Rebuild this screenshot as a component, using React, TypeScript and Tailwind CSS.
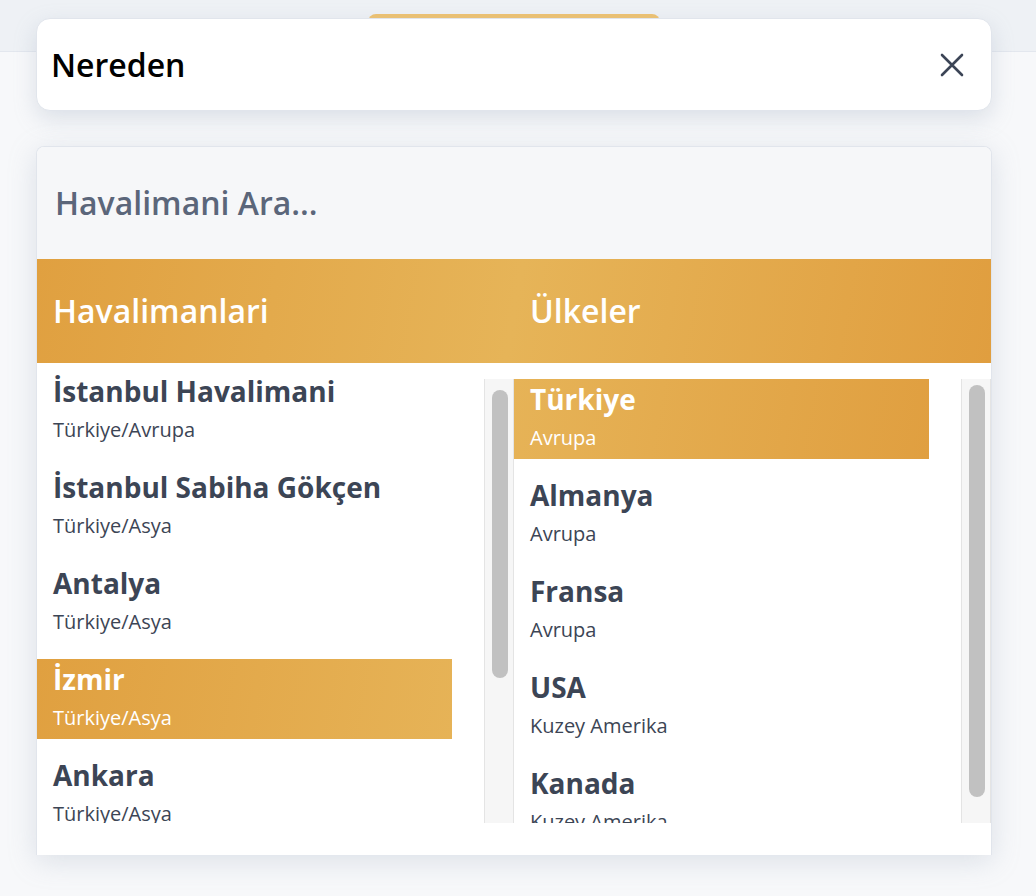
import clsx from 'clsx'

interface Entry {
  name: string
  region: string
  active?: boolean
}

const airports: Entry[] = [
  { name: 'İstanbul Havalimani', region: 'Türkiye/Avrupa' },
  { name: 'İstanbul Sabiha Gökçen', region: 'Türkiye/Asya' },
  { name: 'Antalya', region: 'Türkiye/Asya' },
  { name: 'İzmir', region: 'Türkiye/Asya', active: true },
  { name: 'Ankara', region: 'Türkiye/Asya' },
]

const countries: Entry[] = [
  { name: 'Türkiye', region: 'Avrupa', active: true },
  { name: 'Almanya', region: 'Avrupa' },
  { name: 'Fransa', region: 'Avrupa' },
  { name: 'USA', region: 'Kuzey Amerika' },
  { name: 'Kanada', region: 'Kuzey Amerika' },
]

function ListItem({ entry, activeBg }: { entry: Entry; activeBg: string }) {
  return (
    <div
      className={clsx(
        'h-[80px] mb-4 pl-4',
        entry.active ? clsx(activeBg, 'text-white') : 'text-[#3c4555]'
      )}
    >
      <div className="text-[28px] font-bold leading-[38px] pt-px whitespace-nowrap">{entry.name}</div>
      <div className="text-[20px] leading-[27px] mt-[6px] whitespace-nowrap">{entry.region}</div>
    </div>
  )
}

// thumb offset goes on the track as padding so nothing collapses
function FakeScrollbar({ offset, thumbHeight }: { offset: string; thumbHeight: string }) {
  return (
    <div className="pt-4">
      <div className={clsx('w-[30px] h-[444px] bg-[#f6f6f6] border-l border-r border-[#e4e4e4] pl-[7px]', offset)}>
        <div className={clsx('w-4 rounded-full bg-[#c1c1c1]', thumbHeight)} />
      </div>
    </div>
  )
}

export default function App() {
  return (
    <div className="relative min-h-screen bg-[#f7f8fa]" style={{ fontFamily: '"Open Sans", "Noto Sans", sans-serif' }}>
      {/* page behind the sheet */}
      <div className="h-[52px] bg-[#eef1f5] border-b border-[#e3e7ee] pt-[14px] pl-[368px]">
        <div className="w-[292px] h-[10px] rounded-t-lg bg-[#eec271]" />
      </div>

      {/* airport picker sheet */}
      <div className="absolute inset-x-0 top-0 pl-9 pr-11 pt-[18px]">
        <div className="h-[93px] flex items-center justify-between bg-white rounded-[14px] border border-[#e1e5ec] pl-[14px] pr-[27px] shadow-[0_8px_22px_rgba(148,163,184,0.28)]">
          <span className="text-[32px] font-semibold text-black">Nereden</span>
          <svg width="24" height="24" viewBox="0 0 24 24" fill="none" stroke="#3c4556" strokeWidth="2.6" strokeLinecap="round">
            <path d="M2 2 22 22M22 2 2 22" />
          </svg>
        </div>

        <div className="mt-[35px] bg-white rounded-t-lg border-t border-x border-[#e1e5ec] overflow-hidden shadow-[0_6px_28px_rgba(148,163,184,0.28)]">
          <div className="h-[112px] flex items-center bg-[#f6f7f9]">
            <input
              className="w-full bg-transparent outline-none pl-[18px] text-[32px] font-semibold text-[#5b667a] placeholder:text-[#5b667a]"
              placeholder="Havalimani Ara..."
            />
          </div>

          <div className="h-[104px] grid grid-cols-2 items-center bg-[linear-gradient(100deg,#e0a040_0%,#e6b458_50%,#e09e3f_100%)] text-white text-[32px] font-semibold">
            <div className="pl-4">Havalimanlari</div>
            <div className="pl-4">Ülkeler</div>
          </div>

          <div className="grid grid-cols-2 pb-8">
            <div className="flex">
              <div className="w-[416px] h-[460px] overflow-hidden pt-2">
                {airports.map((a) => (
                  <ListItem key={a.name} entry={a} activeBg="bg-[linear-gradient(100deg,#e0a040,#e6b357)]" />
                ))}
              </div>
              <div className="w-8" />
              <FakeScrollbar offset="pt-[11px]" thumbHeight="h-[288px]" />
            </div>
            <div className="flex">
              <div className="w-[416px] h-[460px] overflow-hidden pt-4">
                {countries.map((c) => (
                  <ListItem key={c.name} entry={c} activeBg="bg-[linear-gradient(100deg,#e6b357,#e09f40)]" />
                ))}
              </div>
              <div className="w-8" />
              <FakeScrollbar offset="pt-[6px]" thumbHeight="h-[412px]" />
            </div>
          </div>
        </div>
      </div>
    </div>
  )
}
